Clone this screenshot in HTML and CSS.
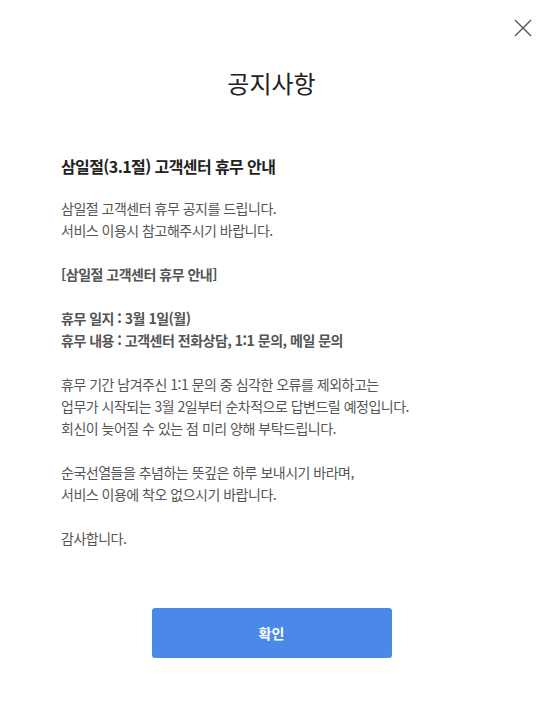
FILE: index.html
```html
<!DOCTYPE html>
<html lang="ko">

<head>
    <meta charset="UTF-8">
    <meta name="viewport" content="width=device-width, initial-scale=1.0">
    <title>공지사항</title>
    <link rel="stylesheet" href="styles.css">
</head>

<body>
    <div class="popup">
        <span class="close">
            <svg width="18" height="18" viewBox="0 0 18 18">
                <path d="M1 1L17 17M17 1L1 17" stroke="#555" stroke-width="1.4" fill="none" />
            </svg>
        </span>
        <h1>공지사항</h1>
        <div class="notice">
            <h2>삼일절(3.1절) 고객센터 휴무 안내</h2>
            <p>삼일절 고객센터 휴무 공지를 드립니다.<br>서비스 이용시 참고해주시기 바랍니다.</p>
            <p class="strong">[삼일절 고객센터 휴무 안내]</p>
            <p class="strong">휴무 일지 : 3월 1일(월)<br>휴무 내용 : 고객센터 전화상담, 1:1 문의, 메일 문의</p>
            <p>휴무 기간 남겨주신 1:1 문의 중 심각한 오류를 제외하고는<br>업무가 시작되는 3월 2일부터 순차적으로 답변드릴 예정입니다.<br>회신이 늦어질 수 있는 점 미리 양해 부탁드립니다.</p>
            <p>순국선열들을 추념하는 뜻깊은 하루 보내시기 바라며,<br>서비스 이용에 착오 없으시기 바랍니다.</p>
            <p>감사합니다.</p>
        </div>
        <div class="buttons">
            <button type="button">확인</button>
        </div>
    </div>
</body>

</html>
```

FILE: styles.css
```css
body {
    font-family: "Noto Sans CJK KR", "Noto Sans", sans-serif;
    background-color: #fff;
    margin: 0;
    padding: 0;
}

.popup {
    position: relative;
    padding: 64px 67px 0 61px;
}

.close {
    position: absolute;
    top: 19px;
    right: 17px;
    width: 18px;
    height: 18px;
    cursor: pointer;
}

.close svg {
    display: block;
}

h1 {
    margin: 0;
    text-align: center;
    font-size: 24px;
    font-weight: 400;
    line-height: 38px;
    color: #222;
}

.notice {
    margin-top: 51px;
}

h2 {
    margin: 0 0 18px;
    font-size: 16px;
    font-weight: 700;
    line-height: 26px;
    letter-spacing: -0.6px;
    color: #222;
}

p {
    margin: 0 0 22px;
    font-size: 14px;
    line-height: 22px;
    letter-spacing: -0.5px;
    color: #555;
}

p.strong {
    font-weight: 700;
}

.buttons {
    margin-top: 59px;
    text-align: center;
}

button {
    width: 240px;
    height: 50px;
    border: none;
    border-radius: 3px;
    background-color: #4a89e8;
    color: #fff;
    font-family: inherit;
    font-size: 14px;
    font-weight: 700;
    cursor: pointer;
}
```
